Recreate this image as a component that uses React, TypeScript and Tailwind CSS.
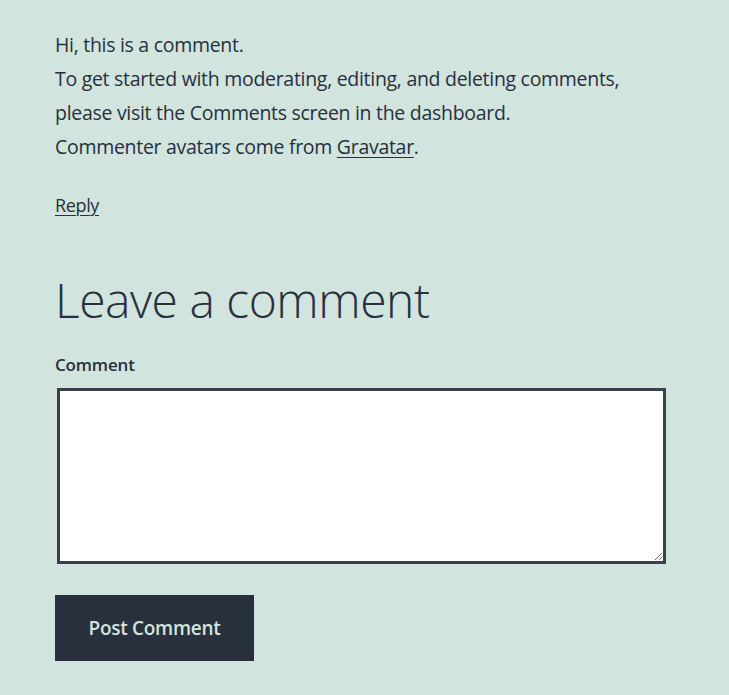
import React, { useState } from 'react';

export default function App() {
  const [comment, setComment] = useState('');

  return (
    <div className="min-h-screen bg-[#d1e4dd] text-[#28303d] font-['Open_Sans',sans-serif]">
      <div className="pl-[55px] pt-[28px] w-[674px]">
        <p className="text-[19.5px] leading-[34px] tracking-[-0.015em]">
          Hi, this is a comment.
          <br />
          To get started with moderating, editing, and deleting comments, please visit the Comments screen in the dashboard.
          <br />
          Commenter avatars come from{' '}
          <a href="#" className="underline underline-offset-[3px] decoration-1">
            Gravatar
          </a>
          .
        </p>

        <div className="mt-[24px] text-[18px] leading-[34px] tracking-[-0.02em]">
          <a href="#" className="underline underline-offset-[3px] decoration-1">
            Reply
          </a>
        </div>

        <h2 className="mt-[47px] text-[48px] leading-[62px] font-light tracking-[-0.01em]">Leave a comment</h2>

        <form className="mt-[21px]" onSubmit={(e) => e.preventDefault()}>
          <label htmlFor="comment" className="block text-[17px] leading-[26px] font-semibold tracking-[-0.01em]">
            Comment
          </label>
          <textarea
            id="comment"
            value={comment}
            onChange={(e) => setComment(e.target.value)}
            className="block mt-[10px] ml-[2px] w-[609px] h-[176px] bg-white border-[3px] border-[#39414d] outline-none"
          />
          <button
            type="submit"
            className="mt-[31px] w-[199px] h-[66px] bg-[#28303d] text-[#d1e4dd] text-[19px] font-semibold tracking-[-0.015em]"
          >
            Post Comment
          </button>
        </form>
      </div>
    </div>
  );
}
